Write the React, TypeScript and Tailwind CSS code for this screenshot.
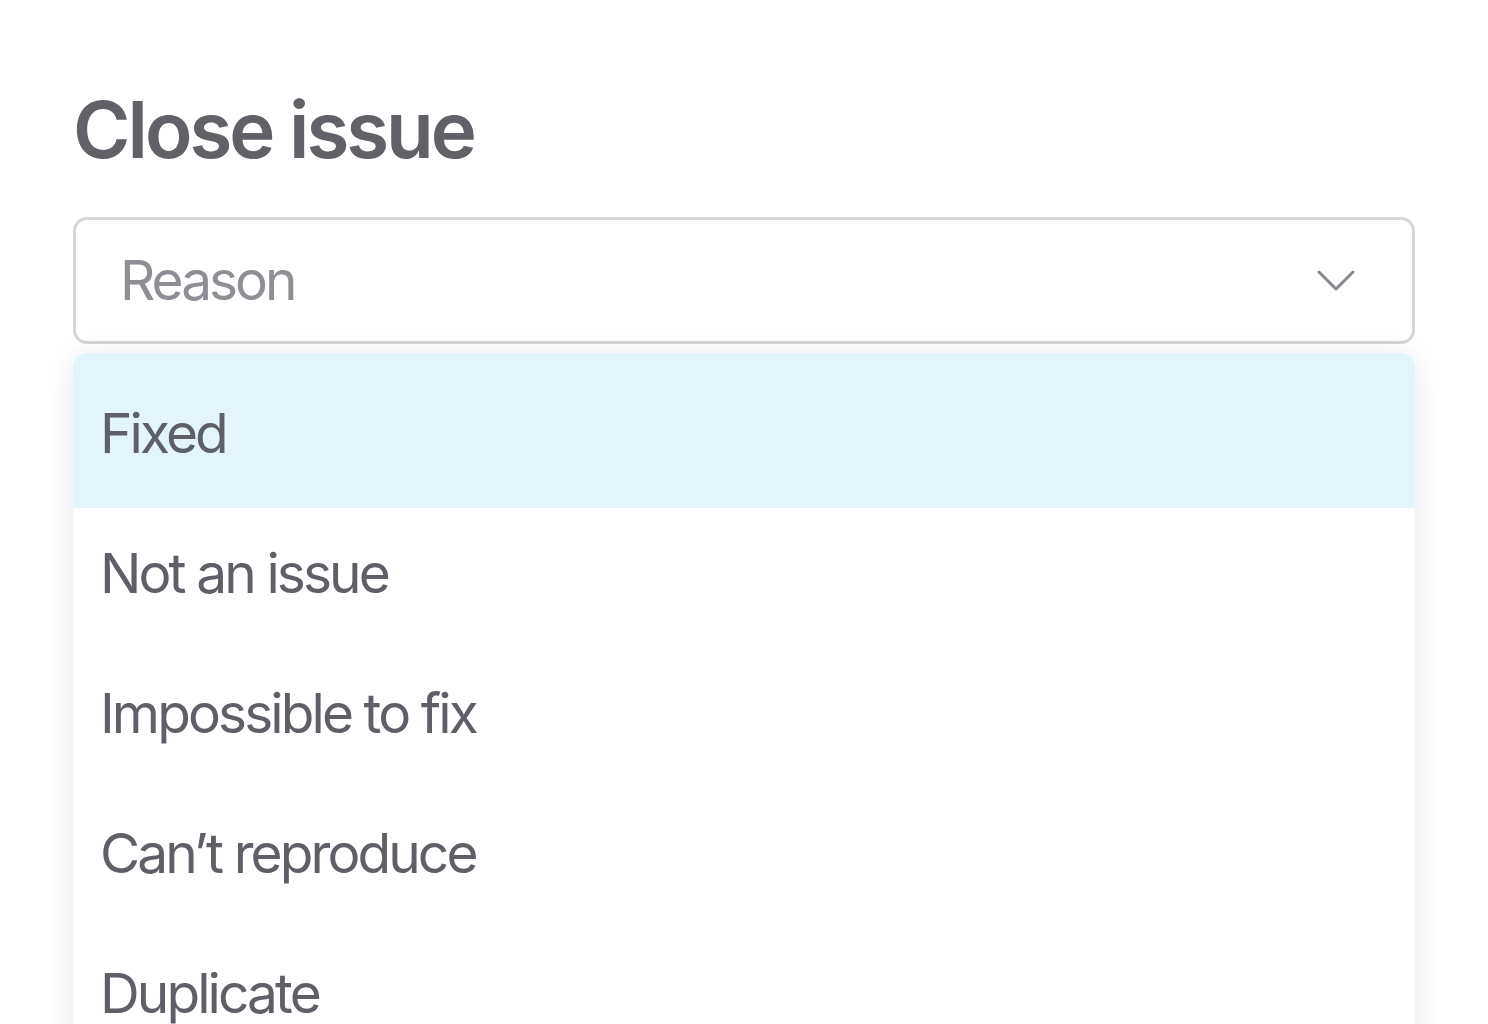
const REASONS = ['Fixed', 'Not an issue', 'Impossible to fix', 'Can’t reproduce', 'Duplicate']

function Chevron() {
  return (
    <svg width="40" height="24" viewBox="0 0 40 24" fill="none" className="text-[#86868e]">
      <polyline
        points="3,3 20,20 37,3"
        stroke="currentColor"
        strokeWidth="3"
        strokeLinecap="round"
        strokeLinejoin="round"
      />
    </svg>
  )
}

export default function App() {
  return (
    <div
      className="h-[1024px] w-[1488px] overflow-hidden bg-white px-[73px] pt-[88px]"
      style={{ fontFamily: 'Inter, "Noto Sans", sans-serif' }}
    >
      <h1 className="text-[78px] leading-[84px] font-semibold tracking-[-3px] text-[#616168]">Close issue</h1>

      <div className="mt-[45px] flex h-[127px] items-center justify-between rounded-[14px] border-[3px] border-[#d6d6d8] pl-[44px] pr-[56px]">
        <span className="text-[55px] font-normal tracking-[-3px] text-[#8e8e95]">Reason</span>
        <Chevron />
      </div>

      <div className="mt-[9px] overflow-hidden rounded-t-[14px] bg-white shadow-[0_4px_30px_rgba(30,40,90,0.1)]">
        {REASONS.map((r, i) => (
          <div
            key={r}
            className={
              i === 0
                ? 'flex h-[155px] items-center bg-[#e3f4fb] pl-[27px] pt-[6px] text-[55px] tracking-[-2.9px] text-[#5e5f67]'
                : 'flex h-[140px] items-center pl-[27px] pb-[10px] text-[55px] tracking-[-2.9px] text-[#5e5f67]'
            }
          >
            {r}
          </div>
        ))}
      </div>
    </div>
  )
}
